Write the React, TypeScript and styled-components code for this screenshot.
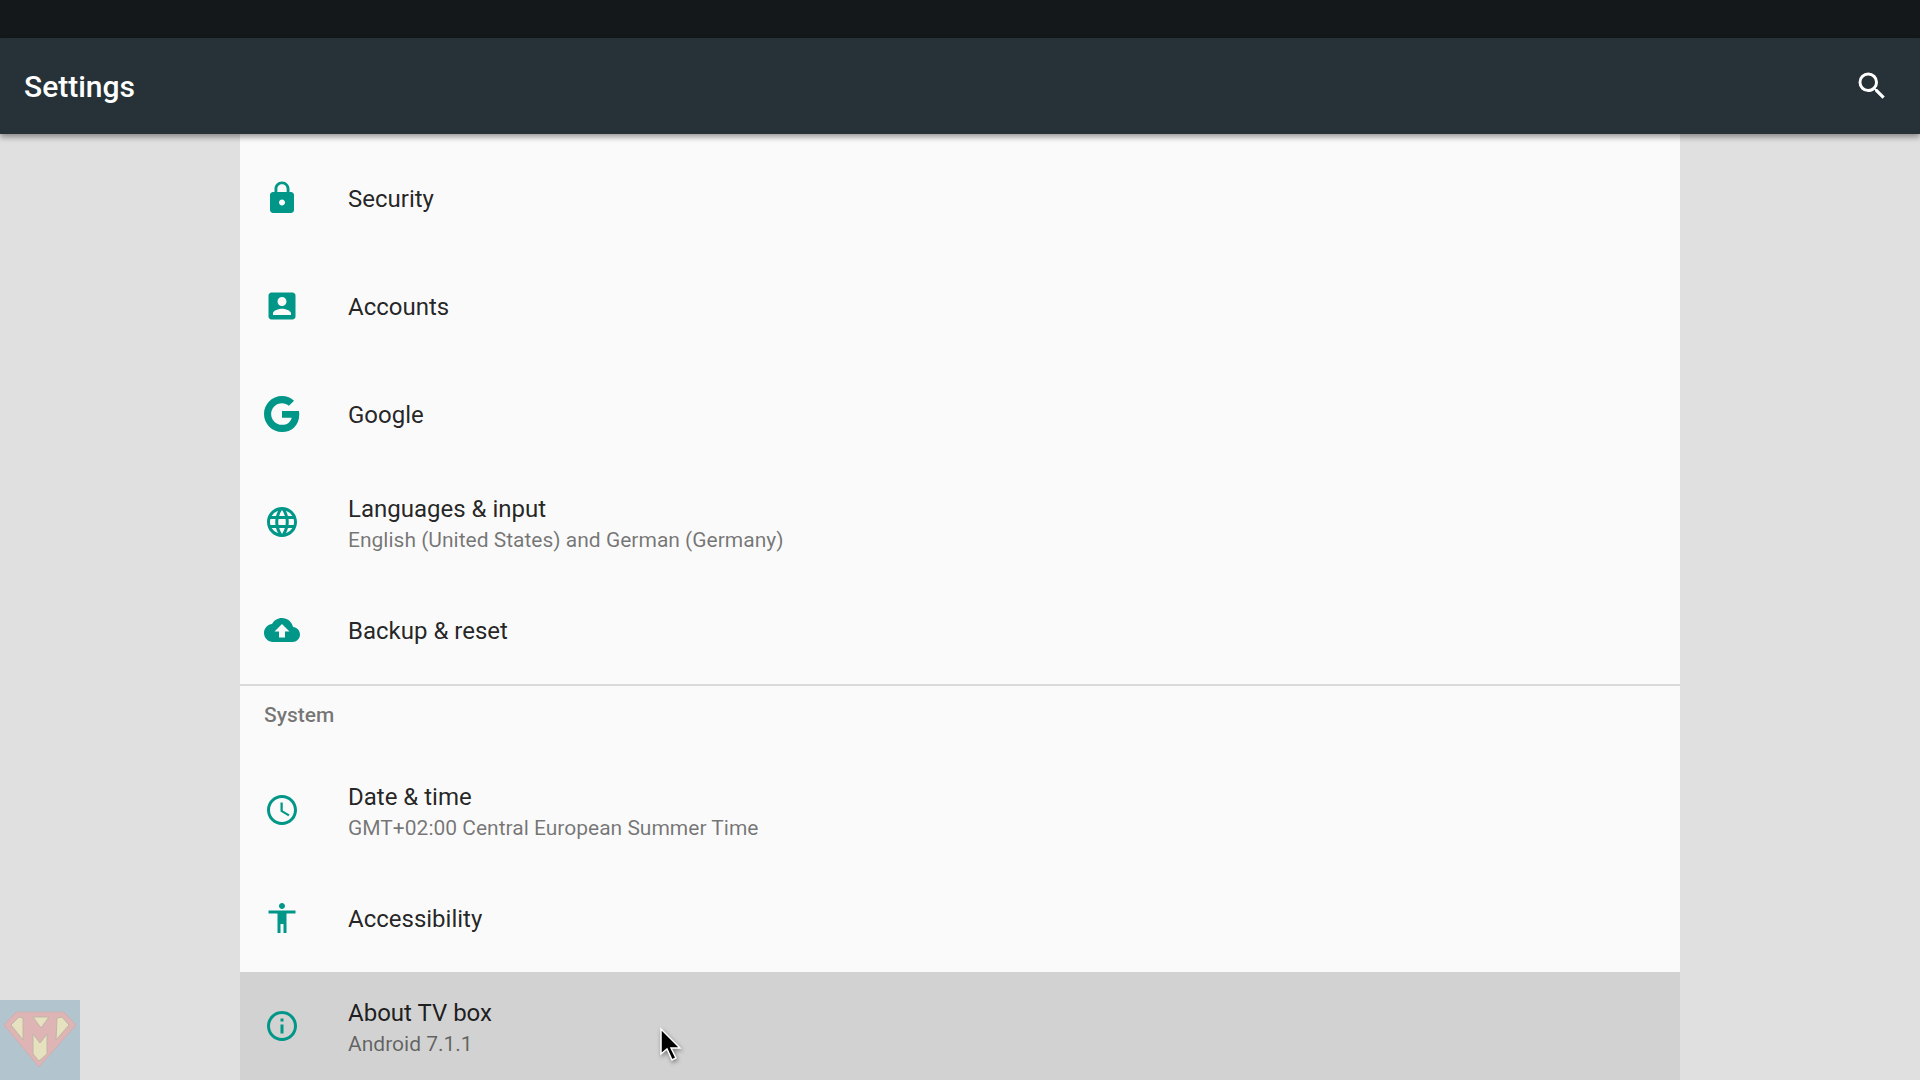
import React from "react";
import styled, { createGlobalStyle } from "styled-components";

const GlobalStyle = createGlobalStyle`
  *, *::before, *::after { box-sizing: border-box; }
  html, body, #root { height: 100%; }
  body {
    margin: 0;
    overflow: hidden;
    background: #e0e0e0;
    font-family: Roboto, "Noto Sans", sans-serif;
  }
`;

const Screen = styled.div`
  display: flex;
  flex-direction: column;
  min-height: 100%;
`;

const StatusBar = styled.div`
  flex: none;
  height: 38px;
  background: #14181b;
`;

const AppBar = styled.header`
  flex: none;
  z-index: 1;
  display: flex;
  align-items: center;
  justify-content: space-between;
  height: 96px;
  padding: 0 24px;
  background: #263238;
  box-shadow: 0 3px 6px rgba(0, 0, 0, 0.4);
`;

const AppTitle = styled.h1`
  margin: 0;
  padding-top: 2px;
  color: #ffffff;
  font-size: 30px;
  line-height: 36px;
  font-weight: 500;
`;

const SearchButton = styled.button`
  display: flex;
  padding: 6px;
  border: 0;
  background: none;
  color: #ffffff;
  cursor: pointer;
`;

const Content = styled.main`
  flex: 1;
  padding: 0 12.5%;
`;

const Panel = styled.div`
  min-height: 100%;
  padding-top: 10px;
  background: #fafafa;
`;

const Category = styled.section<{ $divided?: boolean }>`
  border-top: ${(p) => (p.$divided ? "2px solid #d9d9d9" : "0")};
`;

const CategoryTitle = styled.h2`
  margin: 0;
  padding: 15px 24px 27px;
  color: rgba(0, 0, 0, 0.54);
  font-size: 21px;
  line-height: 28px;
  font-weight: 500;
`;

const List = styled.ul`
  margin: 0;
  padding: 0;
  list-style: none;
`;

const Row = styled.a<{ $pressed?: boolean }>`
  display: flex;
  align-items: center;
  gap: 48px;
  min-height: 108px;
  padding: 0 24px;
  background: ${(p) => (p.$pressed ? "#d2d2d2" : "transparent")};
  color: #009688;
  text-decoration: none;
`;

const Labels = styled.span`
  display: flex;
  flex-direction: column;
  padding-top: 2px;
`;

const Title = styled.span`
  color: rgba(0, 0, 0, 0.87);
  font-size: 24px;
  line-height: 34px;
`;

const Summary = styled.span`
  color: rgba(0, 0, 0, 0.54);
  font-size: 21px;
  line-height: 28px;
`;

const Glyph = styled.svg`
  display: block;
  flex: none;
  width: 36px;
  height: 36px;
  fill: currentColor;
`;

const Watermark = styled.svg`
  position: fixed;
  left: 0;
  bottom: 0;
  width: 80px;
  height: 80px;
`;

const Pointer = styled.svg`
  position: fixed;
  left: 656px;
  top: 1024px;
  width: 32px;
  height: 44px;
  filter: drop-shadow(1px 2px 2px rgba(0, 0, 0, 0.4));
  pointer-events: none;
`;

const paths = {
  search:
    "M15.5 14h-.79l-.28-.27A6.471 6.471 0 0 0 16 9.5 6.5 6.5 0 1 0 9.5 16c1.61 0 3.09-.59 4.23-1.57l.27.28v.79l5 4.99L20.49 19l-4.99-5zm-6 0C7.01 14 5 11.99 5 9.5S7.01 5 9.5 5 14 7.01 14 9.5 11.99 14 9.5 14z",
  lock: "M18 8h-1V6c0-2.76-2.24-5-5-5S7 3.24 7 6v2H6c-1.1 0-2 .9-2 2v10c0 1.1.9 2 2 2h12c1.1 0 2-.9 2-2V10c0-1.1-.9-2-2-2zm-6 9c-1.1 0-2-.9-2-2s.9-2 2-2 2 .9 2 2-.9 2-2 2zm3.1-9H8.9V6c0-1.71 1.39-3.1 3.1-3.1 1.71 0 3.1 1.39 3.1 3.1v2z",
  account:
    "M3 5v14c0 1.1.89 2 2 2h14c1.1 0 2-.9 2-2V5c0-1.1-.9-2-2-2H5c-1.11 0-2 .9-2 2zm12 4c0 1.66-1.34 3-3 3s-3-1.34-3-3 1.34-3 3-3 3 1.34 3 3zm-9 8c0-2 4-3.1 6-3.1s6 1.1 6 3.1v1H6v-1z",
  google:
    "M24 9.5c3.54 0 6.71 1.22 9.21 3.6l6.85-6.85C35.9 2.38 30.47 0 24 0 10.75 0 0 10.75 0 24s10.75 24 24 24c6.48 0 11.93-2.13 15.89-5.81 4.51-4.18 7.09-10.36 7.09-17.65 0-1.57-.15-3.09-.38-4.55H24v9.02h12.94c-.58 2.96-2.26 5.48-4.78 7.18-2.15 1.45-4.92 2.3-8.16 2.3-8 0-14.5-6.5-14.5-14.5S16 9.5 24 9.5z",
  globe:
    "M11.99 2C6.47 2 2 6.48 2 12s4.47 10 9.99 10C17.52 22 22 17.52 22 12S17.52 2 11.99 2zm6.93 6h-2.95a15.65 15.65 0 0 0-1.38-3.56A8.03 8.03 0 0 1 18.92 8zM12 4.04c.83 1.2 1.48 2.53 1.91 3.96h-3.82c.43-1.43 1.08-2.76 1.91-3.96zM4.26 14C4.1 13.36 4 12.69 4 12s.1-1.36.26-2h3.38c-.08.66-.14 1.32-.14 2s.06 1.34.14 2H4.26zm.82 2h2.95c.32 1.25.78 2.45 1.38 3.56A7.987 7.987 0 0 1 5.08 16zm2.95-8H5.08a7.987 7.987 0 0 1 4.33-3.56A15.65 15.65 0 0 0 8.03 8zM12 19.96c-.83-1.2-1.48-2.53-1.91-3.96h3.82c-.43 1.43-1.08 2.76-1.91 3.96zM14.34 14H9.66c-.09-.66-.16-1.32-.16-2s.07-1.35.16-2h4.68c.09.65.16 1.32.16 2s-.07 1.34-.16 2zm.25 5.56c.6-1.11 1.06-2.31 1.38-3.56h2.95a8.03 8.03 0 0 1-4.33 3.56zM16.36 14c.08-.66.14-1.32.14-2s-.06-1.34-.14-2h3.38c.16.64.26 1.31.26 2s-.1 1.36-.26 2h-3.38z",
  backup:
    "M19.35 10.04C18.67 6.59 15.64 4 12 4 9.11 4 6.6 5.64 5.35 8.04 2.34 8.36 0 10.91 0 14c0 3.31 2.69 6 6 6h13c2.76 0 5-2.24 5-5 0-2.64-2.05-4.78-4.65-4.96zM14 13v4h-4v-4H7l5-5 5 5h-3z",
  clock:
    "M11.99 2C6.47 2 2 6.48 2 12s4.47 10 9.99 10C17.52 22 22 17.52 22 12S17.52 2 11.99 2zM12 20c-4.42 0-8-3.58-8-8s3.58-8 8-8 8 3.58 8 8-3.58 8-8 8zM12.5 7H11v6l5.25 3.15.75-1.23-4.5-2.67z",
  accessibility:
    "M12 2c1.1 0 2 .9 2 2s-.9 2-2 2-2-.9-2-2 .9-2 2-2zm9 7h-6v13h-2v-6h-2v6H9V9H3V7h18v2z",
  info: "M11 17h2v-6h-2v6zm1-15C6.48 2 2 6.48 2 12s4.48 10 10 10 10-4.48 10-10S17.52 2 12 2zm0 18c-4.41 0-8-3.59-8-8s3.59-8 8-8 8 3.59 8 8-3.59 8-8 8zM11 9h2V7h-2v2z",
};

type IconName = keyof typeof paths;

function Icon({ name }: { name: IconName }) {
  return (
    <Glyph viewBox={name === "google" ? "0 0 48 48" : "0 0 24 24"} aria-hidden="true">
      <path d={paths[name]} />
    </Glyph>
  );
}

interface Setting {
  icon: IconName;
  title: string;
  summary?: string;
  pressed?: boolean;
}

const personal: Setting[] = [
  { icon: "lock", title: "Security" },
  { icon: "account", title: "Accounts" },
  { icon: "google", title: "Google" },
  {
    icon: "globe",
    title: "Languages & input",
    summary: "English (United States) and German (Germany)",
  },
  { icon: "backup", title: "Backup & reset" },
];

const system: Setting[] = [
  {
    icon: "clock",
    title: "Date & time",
    summary: "GMT+02:00 Central European Summer Time",
  },
  { icon: "accessibility", title: "Accessibility" },
  { icon: "info", title: "About TV box", summary: "Android 7.1.1", pressed: true },
];

function SettingsList({ items }: { items: Setting[] }) {
  return (
    <List>
      {items.map((item) => (
        <li key={item.title}>
          <Row href={`#${item.icon}`} $pressed={item.pressed}>
            <Icon name={item.icon} />
            <Labels>
              <Title>{item.title}</Title>
              {item.summary && <Summary>{item.summary}</Summary>}
            </Labels>
          </Row>
        </li>
      ))}
    </List>
  );
}

export default function App() {
  return (
    <>
      <GlobalStyle />
      <Screen>
        <StatusBar />
        <AppBar>
          <AppTitle>Settings</AppTitle>
          <SearchButton type="button" aria-label="Search">
            <Icon name="search" />
          </SearchButton>
        </AppBar>
        <Content>
          <Panel>
            <Category>
              <SettingsList items={personal} />
            </Category>
            <Category $divided>
              <CategoryTitle>System</CategoryTitle>
              <SettingsList items={system} />
            </Category>
          </Panel>
        </Content>
      </Screen>

      {/* Channel badge: a diamond shield with cut-out panels */}
      <Watermark viewBox="0 0 80 80" aria-hidden="true">
        <rect width="80" height="80" fill="#b2c5cf" />
        <path
          d="M16 12H64L76 25L39 67L4 25Z"
          fill="#dfb4b4"
          stroke="#cbb0b3"
          strokeWidth="1"
        />
        <g fill="#e6e1bf" stroke="#c0b5a8" strokeWidth="1">
          <path d="M19 17L23 18V40L11 25Z" />
          <path d="M33 17H49L41 28Z" />
          <path d="M57 18L62 17L69 25L56 40Z" />
          <path d="M33 34L40 43L47 34V54L39 61L33 54Z" />
        </g>
      </Watermark>

      <Pointer viewBox="0 0 32 44" aria-hidden="true">
        <path
          d="M5 5V30L11 25L16 36L20 34L15 24H24Z"
          fill="#000000"
          stroke="#ffffff"
          strokeWidth="1.5"
        />
      </Pointer>
    </>
  );
}
